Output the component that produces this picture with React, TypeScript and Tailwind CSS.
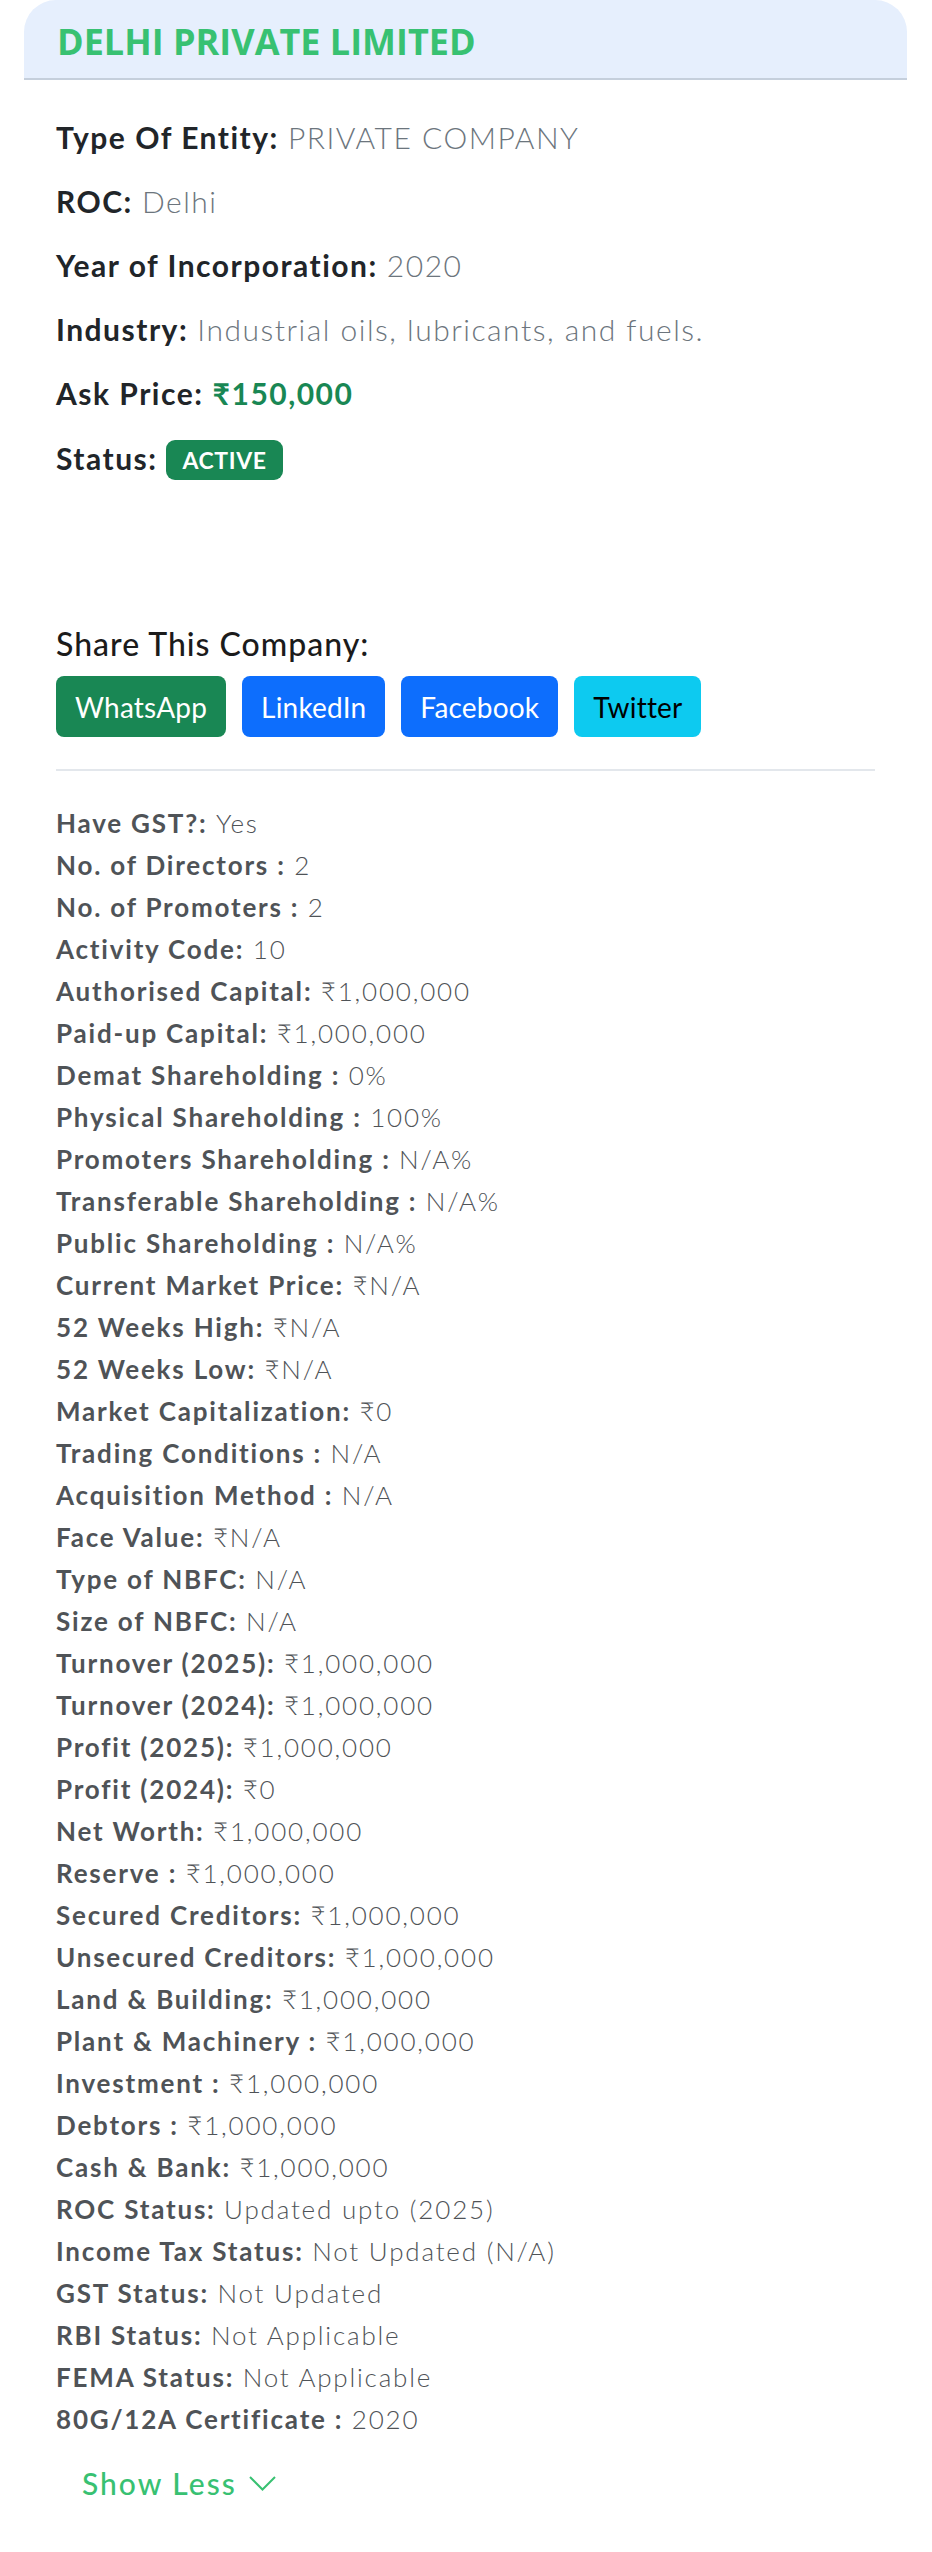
import React from "react";

const details: [string, string][] = [
  ["Have GST?:", "Yes"],
  ["No. of Directors :", "2"],
  ["No. of Promoters :", "2"],
  ["Activity Code:", "10"],
  ["Authorised Capital:", "₹1,000,000"],
  ["Paid-up Capital:", "₹1,000,000"],
  ["Demat Shareholding :", "0%"],
  ["Physical Shareholding :", "100%"],
  ["Promoters Shareholding :", "N/A%"],
  ["Transferable Shareholding :", "N/A%"],
  ["Public Shareholding :", "N/A%"],
  ["Current Market Price:", "₹N/A"],
  ["52 Weeks High:", "₹N/A"],
  ["52 Weeks Low:", "₹N/A"],
  ["Market Capitalization:", "₹0"],
  ["Trading Conditions :", "N/A"],
  ["Acquisition Method :", "N/A"],
  ["Face Value:", "₹N/A"],
  ["Type of NBFC:", "N/A"],
  ["Size of NBFC:", "N/A"],
  ["Turnover (2025):", "₹1,000,000"],
  ["Turnover (2024):", "₹1,000,000"],
  ["Profit (2025):", "₹1,000,000"],
  ["Profit (2024):", "₹0"],
  ["Net Worth:", "₹1,000,000"],
  ["Reserve :", "₹1,000,000"],
  ["Secured Creditors:", "₹1,000,000"],
  ["Unsecured Creditors:", "₹1,000,000"],
  ["Land & Building:", "₹1,000,000"],
  ["Plant & Machinery :", "₹1,000,000"],
  ["Investment :", "₹1,000,000"],
  ["Debtors :", "₹1,000,000"],
  ["Cash & Bank:", "₹1,000,000"],
  ["ROC Status:", "Updated upto (2025)"],
  ["Income Tax Status:", "Not Updated (N/A)"],
  ["GST Status:", "Not Updated"],
  ["RBI Status:", "Not Applicable"],
  ["FEMA Status:", "Not Applicable"],
  ["80G/12A Certificate :", "2020"],
];

function InfoRow({ label, children }: { label: string; children: React.ReactNode }) {
  return (
    <p className="text-[30px] leading-[42px] tracking-[1.5px] text-[#212529]">
      <span className="font-bold">{label}</span>{" "}
      {children}
    </p>
  );
}

export default function App() {
  return (
    <div className="min-h-[2552px] bg-white [font-family:Lato,sans-serif]">
      <div className="ml-6 w-[883px]">
        {/* header */}
        <div className="flex h-[80px] items-center rounded-t-[32px] border-b-2 border-[#c5cfdc] bg-[#e6effd] px-[33px] pt-[6px]">
          <h1 className="[font-family:'Open_Sans',sans-serif] text-[36px] font-bold leading-none text-[#38c172]">
            DELHI PRIVATE LIMITED
          </h1>
        </div>

        <div className="px-8">
          <div className="mt-[36px] flex flex-col gap-[22px]">
            <InfoRow label="Type Of Entity:">
              <span className="font-light text-[#6c757d]">PRIVATE COMPANY</span>
            </InfoRow>
            <InfoRow label="ROC:">
              <span className="font-light text-[#6c757d]">Delhi</span>
            </InfoRow>
            <InfoRow label="Year of Incorporation:">
              <span className="font-light text-[#6c757d]">2020</span>
            </InfoRow>
            <InfoRow label="Industry:">
              <span className="font-light text-[#6c757d]">Industrial oils, lubricants, and fuels.</span>
            </InfoRow>
            <InfoRow label="Ask Price:">
              <span className="font-bold text-[#198754]">₹150,000</span>
            </InfoRow>
            <div className="flex items-center gap-[9px] text-[30px] leading-[42px] tracking-[1.5px] text-[#212529]">
              <span className="font-bold">Status:</span>
              <span className="mt-[4px] flex h-[40px] items-center rounded-[9px] bg-[#198754] px-4 text-[23px] font-bold leading-none tracking-[0.6px] text-white">
                ACTIVE
              </span>
            </div>
          </div>

          {/* share */}
          <div className="mt-[144px]">
            <h3 className="text-[32px] font-medium leading-[40px] tracking-[1px] text-[#1b1b1b]">
              Share This Company:
            </h3>
            <div className="mt-[12px] flex gap-4">
              <button className="flex h-[61px] items-center rounded-[8px] bg-[#198754] px-[19px] text-[28px] tracking-[0.2px] text-white">
                WhatsApp
              </button>
              <button className="flex h-[61px] items-center rounded-[8px] bg-[#0d6efd] px-[19px] text-[28px] tracking-[0.2px] text-white">
                LinkedIn
              </button>
              <button className="flex h-[61px] items-center rounded-[8px] bg-[#0d6efd] px-[19px] text-[28px] tracking-[0.2px] text-white">
                Facebook
              </button>
              <button className="flex h-[61px] items-center rounded-[8px] bg-[#0dcaf0] px-[19px] text-[28px] tracking-[0.2px] text-black">
                Twitter
              </button>
            </div>
            <hr className="mt-[32px] border-t-2 border-[#e3e7ec]" />
          </div>

          {/* details */}
          <div className="mt-[31px] flex flex-col">
            {details.map(([label, value]) => (
              <p key={label} className="text-[26px] leading-[42px] tracking-[1.8px] text-[#4f5357]">
                <span className="font-bold">{label}</span>{" "}
                <span className="font-light">{value}</span>
              </p>
            ))}
          </div>

          <button className="ml-[26px] mt-[23px] flex items-center gap-[12px] text-[30px] font-medium leading-[40px] tracking-[2px] text-[#38c172]">
            Show Less
            <svg width="27" height="15" viewBox="0 0 27 15" fill="none" stroke="currentColor" strokeWidth="2">
              <path d="M1 1l12.5 12.5L26 1" />
            </svg>
          </button>
        </div>
      </div>
    </div>
  );
}
